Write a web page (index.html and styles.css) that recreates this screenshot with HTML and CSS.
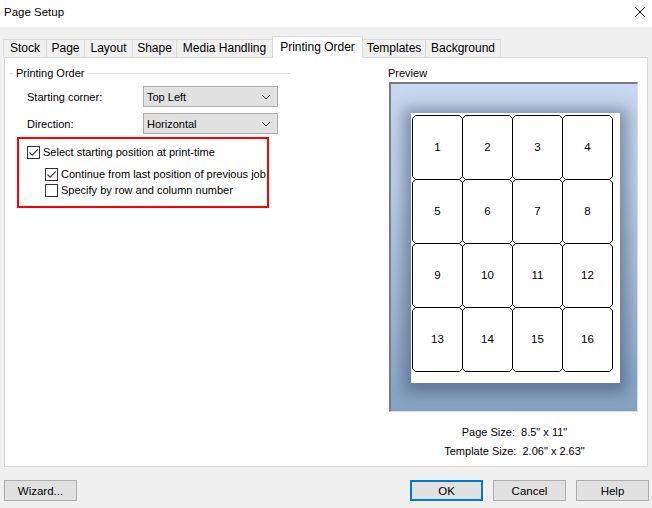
FILE: index.html
```html
<!DOCTYPE html>
<html lang="en">
<head>
  <meta charset="UTF-8">
  <title>Page Setup</title>
  <link rel="stylesheet" href="styles.css">
</head>
<body>
  <div class="dialog">
    <div class="titlebar">
      <span>Page Setup</span>
      <svg class="close" width="12" height="12" viewBox="0 0 12 12">
        <path d="M1 1 L11 11 M11 1 L1 11" stroke="#111" stroke-width="1" fill="none"/>
      </svg>
    </div>

    <div class="tabs">
      <div class="tab w-stock">Stock</div>
      <div class="tab w-page">Page</div>
      <div class="tab w-layout">Layout</div>
      <div class="tab w-shape">Shape</div>
      <div class="tab w-media">Media Handling</div>
      <div class="tab active w-order">Printing Order</div>
      <div class="tab w-templates">Templates</div>
      <div class="tab w-background">Background</div>
    </div>

    <div class="panel">
      <div class="order">
        <div class="group-head"><span>Printing Order</span></div>

        <div class="field">
          <label>Starting corner:</label>
          <div class="select">
            <span>Top Left</span>
            <svg width="10" height="6" viewBox="0 0 10 6"><path d="M1 1 L5 5 L9 1" stroke="#333" fill="none"/></svg>
          </div>
        </div>
        <div class="field">
          <label>Direction:</label>
          <div class="select">
            <span>Horizontal</span>
            <svg width="10" height="6" viewBox="0 0 10 6"><path d="M1 1 L5 5 L9 1" stroke="#333" fill="none"/></svg>
          </div>
        </div>

        <div class="highlight">
          <div class="check">
            <span class="box"><svg width="11" height="11" viewBox="0 0 11 11"><path d="M1.5 5.5 L4.2 8.2 L9.8 2.3" stroke="#333" stroke-width="1.1" fill="none"/></svg></span>
            Select starting position at print-time
          </div>
          <div class="sub">
            <div class="check">
              <span class="box"><svg width="11" height="11" viewBox="0 0 11 11"><path d="M1.5 5.5 L4.2 8.2 L9.8 2.3" stroke="#333" stroke-width="1.1" fill="none"/></svg></span>
              Continue from last position of previous job
            </div>
            <div class="check">
              <span class="box"></span>
              Specify by row and column number
            </div>
          </div>
        </div>
      </div>

      <div class="preview">
        <div class="preview-label">Preview</div>
        <div class="preview-box">
          <div class="sheet">
            <svg class="labels" width="201" height="257" viewBox="0 0 201 257">
              <defs>
                <polygon id="cell" points="3.5,0.5 47.5,0.5 50.5,3.5 50.5,61.5 47.5,64.5 3.5,64.5 0.5,61.5 0.5,3.5" fill="#fff" stroke="#000" stroke-width="1"/>
              </defs>
              <g>
                <use href="#cell" x="0" y="0"/><use href="#cell" x="50" y="0"/><use href="#cell" x="100" y="0"/><use href="#cell" x="150" y="0"/>
                <use href="#cell" x="0" y="64"/><use href="#cell" x="50" y="64"/><use href="#cell" x="100" y="64"/><use href="#cell" x="150" y="64"/>
                <use href="#cell" x="0" y="128"/><use href="#cell" x="50" y="128"/><use href="#cell" x="100" y="128"/><use href="#cell" x="150" y="128"/>
                <use href="#cell" x="0" y="192"/><use href="#cell" x="50" y="192"/><use href="#cell" x="100" y="192"/><use href="#cell" x="150" y="192"/>
              </g>
              <g class="nums" text-anchor="middle">
                <text x="25.5" y="36">1</text><text x="75.5" y="36">2</text><text x="125.5" y="36">3</text><text x="175.5" y="36">4</text>
                <text x="25.5" y="100">5</text><text x="75.5" y="100">6</text><text x="125.5" y="100">7</text><text x="175.5" y="100">8</text>
                <text x="25.5" y="164">9</text><text x="75.5" y="164">10</text><text x="125.5" y="164">11</text><text x="175.5" y="164">12</text>
                <text x="25.5" y="228">13</text><text x="75.5" y="228">14</text><text x="125.5" y="228">15</text><text x="175.5" y="228">16</text>
              </g>
            </svg>
          </div>
        </div>
        <div class="sizes">
          <div>Page Size:&nbsp; 8.5" x 11"</div>
          <div>Template Size:&nbsp; 2.06" x 2.63"</div>
        </div>
      </div>
    </div>

    <div class="buttons">
      <button class="btn wizard">Wizard...</button>
      <div class="spacer"></div>
      <button class="btn default">OK</button>
      <button class="btn">Cancel</button>
      <button class="btn">Help</button>
    </div>
  </div>
</body>
</html>
```

FILE: styles.css
```css
* {
  margin: 0;
  padding: 0;
  box-sizing: border-box;
}

body {
  font-family: 'Liberation Sans', Arial, sans-serif;
  font-size: 12px;
  color: #000;
  background: #f0f0f0;
  width: 652px;
  height: 508px;
  overflow: hidden;
}

.titlebar {
  height: 27px;
  background: #fff;
  display: flex;
  align-items: center;
  justify-content: space-between;
  padding: 0 6px 3px 4px;
}

.titlebar span {
  font-size: 11.5px;
}

/* tabs */
.tabs {
  display: flex;
  align-items: flex-end;
  height: 21px;
  margin-top: 9px;
  padding-left: 3px;
}

.tab {
  height: 18px;
  line-height: 17px;
  text-align: center;
  background: #f0f0f0;
  border: 1px solid #d9d9d9;
  border-bottom: none;
  margin-left: -1px;
}

.tab:first-child {
  margin-left: 0;
}

.tab.active {
  height: 22px;
  line-height: 21px;
  background: #fff;
  margin-bottom: -1px;
  position: relative;
  z-index: 1;
}

.w-stock { width: 44px; }
.w-page { width: 39px; }
.w-layout { width: 49px; }
.w-shape { width: 45px; }
.w-media { width: 97px; }
.w-order { width: 91px; }
.w-templates { width: 64px; }
.w-background { width: 76px; }

/* main panel */
.panel {
  margin-left: 4px;
  width: 644px;
  height: 410px;
  background: #fff;
  border: 1px solid #d9d9d9;
  display: flex;
  padding-top: 7px;
  font-size: 11px;
}

.order {
  width: 281px;
  margin-left: 4px;
}

.group-head {
  display: flex;
  align-items: center;
  height: 16px;
}

.group-head::before {
  content: '';
  width: 4px;
  border-top: 1px solid #dcdcdc;
}

.group-head::after {
  content: '';
  flex: 1;
  border-top: 1px solid #dcdcdc;
}

.group-head span {
  padding: 0 3px;
}

.field {
  display: flex;
  align-items: center;
  padding-left: 18px;
  margin-top: 5px;
}

.field + .field {
  margin-top: 6px;
}

.field label {
  width: 116px;
}

.select {
  width: 135px;
  height: 21px;
  background: #e1e1e1;
  border: 1px solid #adadad;
  display: flex;
  align-items: center;
  justify-content: space-between;
  padding: 0 6px 0 3px;
}

.highlight {
  margin: 3px 0 0 8px;
  width: 252px;
  height: 71px;
  border: 2px solid #f00;
  padding: 5px 0 0 8px;
}

.check {
  display: flex;
  align-items: center;
  height: 16px;
  white-space: nowrap;
}

.box {
  flex: none;
  width: 13px;
  height: 13px;
  border: 1px solid #333;
  background: #fff;
  margin-right: 3px;
  display: flex;
  align-items: center;
  justify-content: center;
}

.sub {
  padding-left: 18px;
  margin-top: 6px;
}

/* preview */
.preview {
  margin-left: 98px;
  width: 251px;
}

.preview-label {
  height: 16px;
  line-height: 16px;
  margin-bottom: 1px;
}

.preview-box {
  margin-left: 1px;
  width: 249px;
  height: 330px;
  border-top: 2px solid #7c7c7c;
  border-left: 2px solid #7c7c7c;
  border-right: 1px solid #e0e0e0;
  border-bottom: 1px solid #e0e0e0;
  background: linear-gradient(#c8d8ee, #bccfe8 30%, #9fb6d2 70%, #86a2c3);
  padding: 29px 0 0 20px;
}

.sheet {
  width: 209px;
  height: 270px;
  background: #fff;
  box-shadow: 0 3px 14px 7px rgba(60, 80, 110, 0.55);
  padding: 2px 0 0 1px;
}

.labels {
  display: block;
}

.nums text {
  font-family: 'Liberation Sans', Arial, sans-serif;
  font-size: 11.5px;
  fill: #000;
}

.sizes {
  text-align: center;
  margin-top: 11px;
  padding-left: 2px;
  line-height: 19px;
}

/* bottom buttons */
.buttons {
  display: flex;
  margin-top: 13px;
  padding: 0 3px 0 4px;
}

.spacer {
  flex: 1;
}

.btn {
  font-family: 'Liberation Sans', Arial, sans-serif;
  font-size: 11.5px;
  color: #000;
  width: 73px;
  height: 21px;
  background: #e1e1e1;
  border: 1px solid #adadad;
  margin-left: 10px;
}

.btn.wizard {
  margin-left: 0;
}

.btn.default {
  border: 2px solid #0078d7;
}
```
